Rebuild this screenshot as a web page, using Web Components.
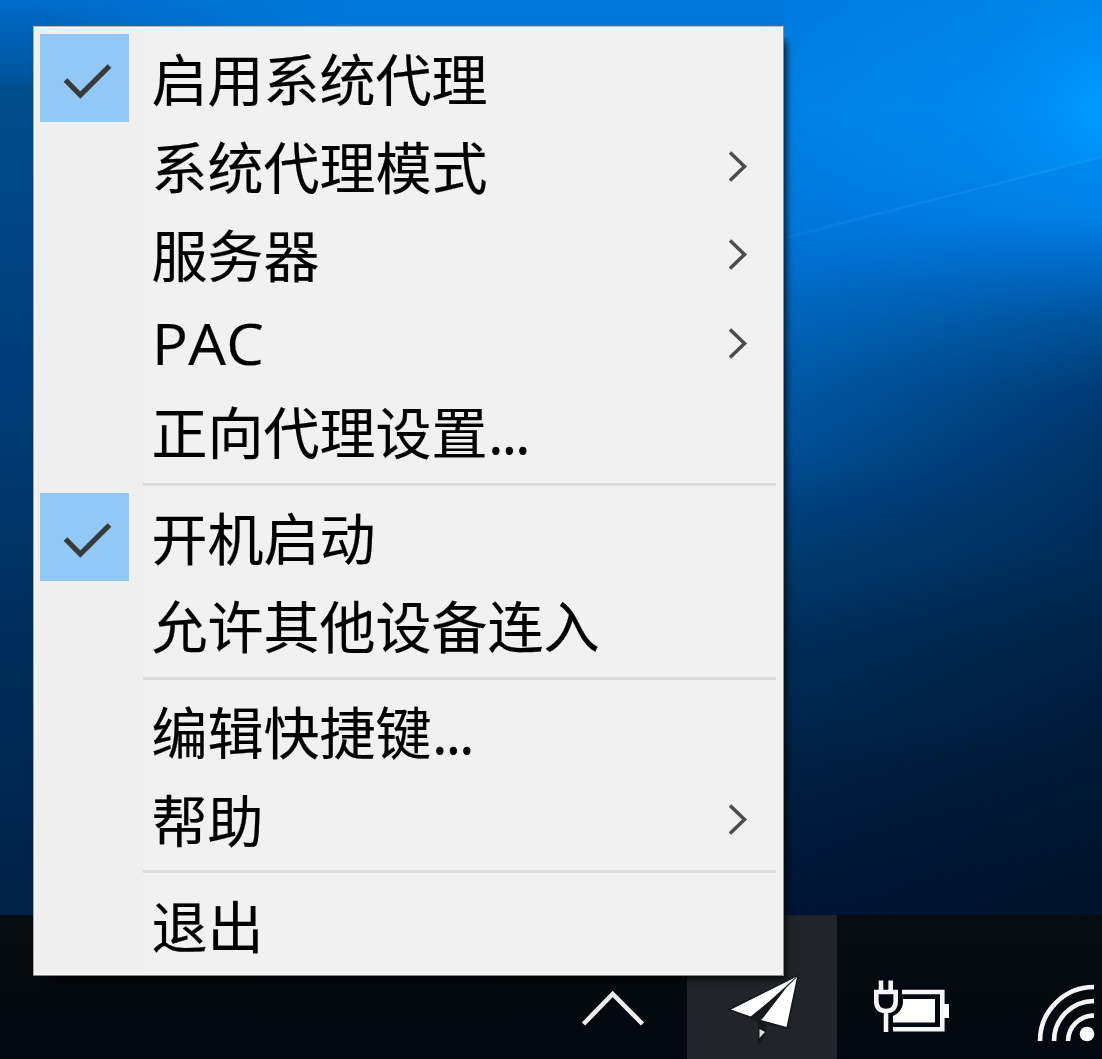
<!DOCTYPE html>
<html lang="zh-CN">
<head>
<meta charset="utf-8">
<title>托盘菜单</title>
<style>
html,body{margin:0;height:100%;overflow:hidden;background:#001228}
body{font-family:"Open Sans","Noto Sans CJK SC",sans-serif}
</style>
</head>
<body>
<desktop-screen>
  <tray-menu>
    <menu-row checked>启用系统代理</menu-row>
    <menu-row submenu>系统代理模式</menu-row>
    <menu-row submenu>服务器</menu-row>
    <menu-row submenu latin>PAC</menu-row>
    <menu-row dots>正向代理设置</menu-row>
    <menu-line></menu-line>
    <menu-row checked>开机启动</menu-row>
    <menu-row>允许其他设备连入</menu-row>
    <menu-line></menu-line>
    <menu-row dots>编辑快捷键</menu-row>
    <menu-row submenu>帮助</menu-row>
    <menu-line></menu-line>
    <menu-row>退出</menu-row>
  </tray-menu>
  <task-bar slot="bar"></task-bar>
</desktop-screen>
<script>
const define = (name, html) => customElements.define(name, class extends HTMLElement {
  constructor() {
    super();
    this.attachShadow({ mode: 'open' }).innerHTML = html;
  }
});

define('desktop-screen', `
<style>
:host{display:flex;flex-direction:column;position:relative;width:1102px;height:1059px;overflow:hidden}
.wall{position:absolute;inset:0;width:100%;height:100%}
.space{flex:1}
.menu{position:absolute;left:33px;top:26px}
slot[name=bar]{display:contents}
</style>
<svg class="wall" viewBox="0 0 1102 1059" preserveAspectRatio="none">
  <defs>
    <linearGradient id="a" x1="0" y1="0" x2="0" y2="915" gradientUnits="userSpaceOnUse">
      <stop offset="0" stop-color="#006cca"/><stop offset=".035" stop-color="#0062b8"/><stop offset=".08" stop-color="#0056a0"/><stop offset=".1" stop-color="#004d8c"/>
      <stop offset=".27" stop-color="#004384"/><stop offset=".47" stop-color="#003b74"/><stop offset=".64" stop-color="#003060"/><stop offset="1" stop-color="#002046"/>
    </linearGradient>
    <linearGradient id="b" x1="0" y1="0" x2="0" y2="915" gradientUnits="userSpaceOnUse">
      <stop offset="0" stop-color="#007bdf"/><stop offset=".12" stop-color="#0080e3"/><stop offset=".25" stop-color="#0077db"/><stop offset=".31" stop-color="#006bc6"/>
      <stop offset=".4" stop-color="#005caa"/><stop offset=".5" stop-color="#004e94"/><stop offset=".55" stop-color="#004280"/><stop offset=".61" stop-color="#003b6e"/>
      <stop offset=".71" stop-color="#002c57"/><stop offset=".78" stop-color="#002850"/><stop offset=".83" stop-color="#002042"/><stop offset="1" stop-color="#001435"/>
    </linearGradient>
    <linearGradient id="c" x1="0" y1="0" x2="0" y2="915" gradientUnits="userSpaceOnUse">
      <stop offset="0" stop-color="#0084e8"/><stop offset=".12" stop-color="#008cf2"/><stop offset=".18" stop-color="#0089ee"/><stop offset=".24" stop-color="#007fe4"/>
      <stop offset=".28" stop-color="#006dcc"/><stop offset=".35" stop-color="#005299"/><stop offset=".43" stop-color="#003b74"/><stop offset=".5" stop-color="#003264"/>
      <stop offset=".61" stop-color="#002c56"/><stop offset=".68" stop-color="#002348"/><stop offset=".77" stop-color="#001c3c"/><stop offset="1" stop-color="#001129"/>
    </linearGradient>
    <linearGradient id="h1" x1="33" x2="350" y1="0" y2="0" gradientUnits="userSpaceOnUse"><stop offset="0" stop-color="#000"/><stop offset="1" stop-color="#ddd"/></linearGradient>
    <linearGradient id="h2" x1="785" x2="1102" y1="0" y2="0" gradientUnits="userSpaceOnUse"><stop offset="0" stop-color="#000"/><stop offset="1" stop-color="#fff"/></linearGradient>
    <mask id="m1" maskUnits="userSpaceOnUse" x="0" y="0" width="1102" height="915"><rect width="785" height="915" fill="url(#h1)"/><rect x="784" width="318" height="915" fill="#fff"/></mask>
    <mask id="m2" maskUnits="userSpaceOnUse" x="0" y="0" width="1102" height="915"><rect width="1102" height="915" fill="url(#h2)"/></mask>
    <radialGradient id="g" cx="1110" cy="108" r="140" gradientUnits="userSpaceOnUse"><stop offset="0" stop-color="#009cff" stop-opacity=".9"/><stop offset=".4" stop-color="#0098fc" stop-opacity=".5"/><stop offset="1" stop-color="#0090f0" stop-opacity="0"/></radialGradient>
    <linearGradient id="ray" x1="785" x2="1102" y1="0" y2="0" gradientUnits="userSpaceOnUse"><stop offset="0" stop-color="#168bea" stop-opacity=".3"/><stop offset=".8" stop-color="#169aff" stop-opacity=".4"/><stop offset="1" stop-color="#169aff" stop-opacity=".3"/></linearGradient>
  </defs>
  <rect width="1102" height="915" fill="url(#a)"/>
  <rect width="1102" height="915" fill="url(#b)" mask="url(#m1)"/>
  <rect width="1102" height="915" fill="url(#c)" mask="url(#m2)"/>
  <path d="M900 0H1102V158L785 238V100Z" fill="url(#g)"/>
  <path d="M785 238L850 221L1102 157" fill="none" stroke="url(#ray)" stroke-width="2.4"/>
</svg>
<div class="space"></div>
<slot name="bar"></slot>
<div class="menu"><slot></slot></div>`);

define('tray-menu', `
<style>
:host{display:flex;flex-direction:column;box-sizing:border-box;width:751px;height:950px;padding:6.5px 7px 5px 6px;border:1px solid #a9a9a9;border-color:#b8babc #8c8f91 #858789 #a5a8ab;
background:linear-gradient(90deg,#efefef 0 109px,#f1f1f1 109px);box-shadow:inset 0 0 0 2px #f3f3f3,8px 9px 7px -6px rgba(0,0,0,.85)}
</style><slot></slot>`);

define('menu-row', `
<style>
:host{display:flex;align-items:center;flex:none;height:88.4px;font-size:56px;line-height:88px;color:#000;white-space:nowrap}
.box{flex:none;width:89px;height:88.4px;margin-right:22.5px}
.box svg,.arrow{display:none}
:host([checked]) .box{background:#91c8f6}
:host([checked]) .box svg{display:block}
.label{flex:1;display:flex;padding-top:2px;-webkit-text-stroke:.2px #000}
:host([latin]) .label{padding-top:0;font-size:56px;letter-spacing:.3px;font-kerning:none;transform:scaleX(1.065);transform-origin:0 0}
.dots{display:none;letter-spacing:-1.2px;margin-left:1px;-webkit-text-stroke:.8px #000}
:host([dots]) .dots{display:inline}
:host([submenu]) .arrow{display:block;margin-right:26.5px}
</style>
<div class="box"><svg width="89" height="88" viewBox="0 0 89 88" fill="none" stroke="#383a3c" stroke-width="5.2"><path d="M25.5 46L40.3 61L69.5 32"/></svg></div>
<div class="label"><slot></slot><span class="dots">...</span></div>
<svg class="arrow" width="22" height="34" viewBox="0 0 22 34" fill="none" stroke="#4c4c4c" stroke-width="3.5"><path d="M2 3.500L16.500 17.500L2 31.500"/></svg>`);

define('menu-line', `
<style>:host{display:flex;align-items:center;flex:none;height:17.2px;padding-left:103px}i{flex:1;height:3px;background:#dcdcdc}</style><i></i>`);

define('task-bar', `
<style>
:host{display:flex;position:relative;height:144px;background:linear-gradient(180deg,#060c10,#040910 70%,#03070f)}
div{display:flex;align-items:flex-end}
svg{display:block}
.chev{width:687px;justify-content:flex-end}
.app{width:150px;background:#212529}
.rest{width:265px}
</style>
<div class="chev"><svg width="127" height="99" viewBox="560 960 127 99" fill="none" stroke="#ececea" stroke-width="4.6"><path d="M583.5 1024L612.7 994L642.5 1024"/></svg></div>
<div class="app"><svg width="150" height="99" viewBox="687 960 150 99">
  <path d="M727 1009.5L799 974.5L788 1029L767 1024L765 1037L758 1044L758 1021Z" fill="#15181b"/>
  <path d="M731 1009.5L796 977L752 1017Z" fill="#fff"/>
  <path d="M797 977L786.5 1027L761 1020L785 989Z" fill="#fff"/>
  <path d="M786 988L750 1017L757 1022L763 1018Z" fill="#171a1c"/>
  <path d="M759.5 1029L765 1032L759.5 1038Z" fill="#ddd"/>
</svg></div>
<div class="rest"><svg width="265" height="99" viewBox="837 960 265 99" fill="none" stroke="#f6f6f6" stroke-width="4.6">
  <path d="M902 992H942.3V1029.3H893"/>
  <path d="M903 999H935V1022.5H893V1016Q902 1012 903 1003Z" fill="#fff" stroke="none"/>
  <path d="M944 1004H949V1018H944Z" fill="#fff" stroke="none"/>
  <path d="M881 980.5V991M890.7 980.5V991M876.3 992H895.7V1001Q895.7 1011 886 1011Q876.3 1011 876.3 1001ZM886 1011V1032"/>
  <path d="M1040 1041A54 54 0 0 1 1094 987M1054 1041A40 40 0 0 1 1094 1001M1068 1041A26 26 0 0 1 1094 1015.5"/>
  <circle cx="1087" cy="1034" r="7.3" fill="#fff" stroke="none"/>
</svg></div>`);
</script>
</body>
</html>
